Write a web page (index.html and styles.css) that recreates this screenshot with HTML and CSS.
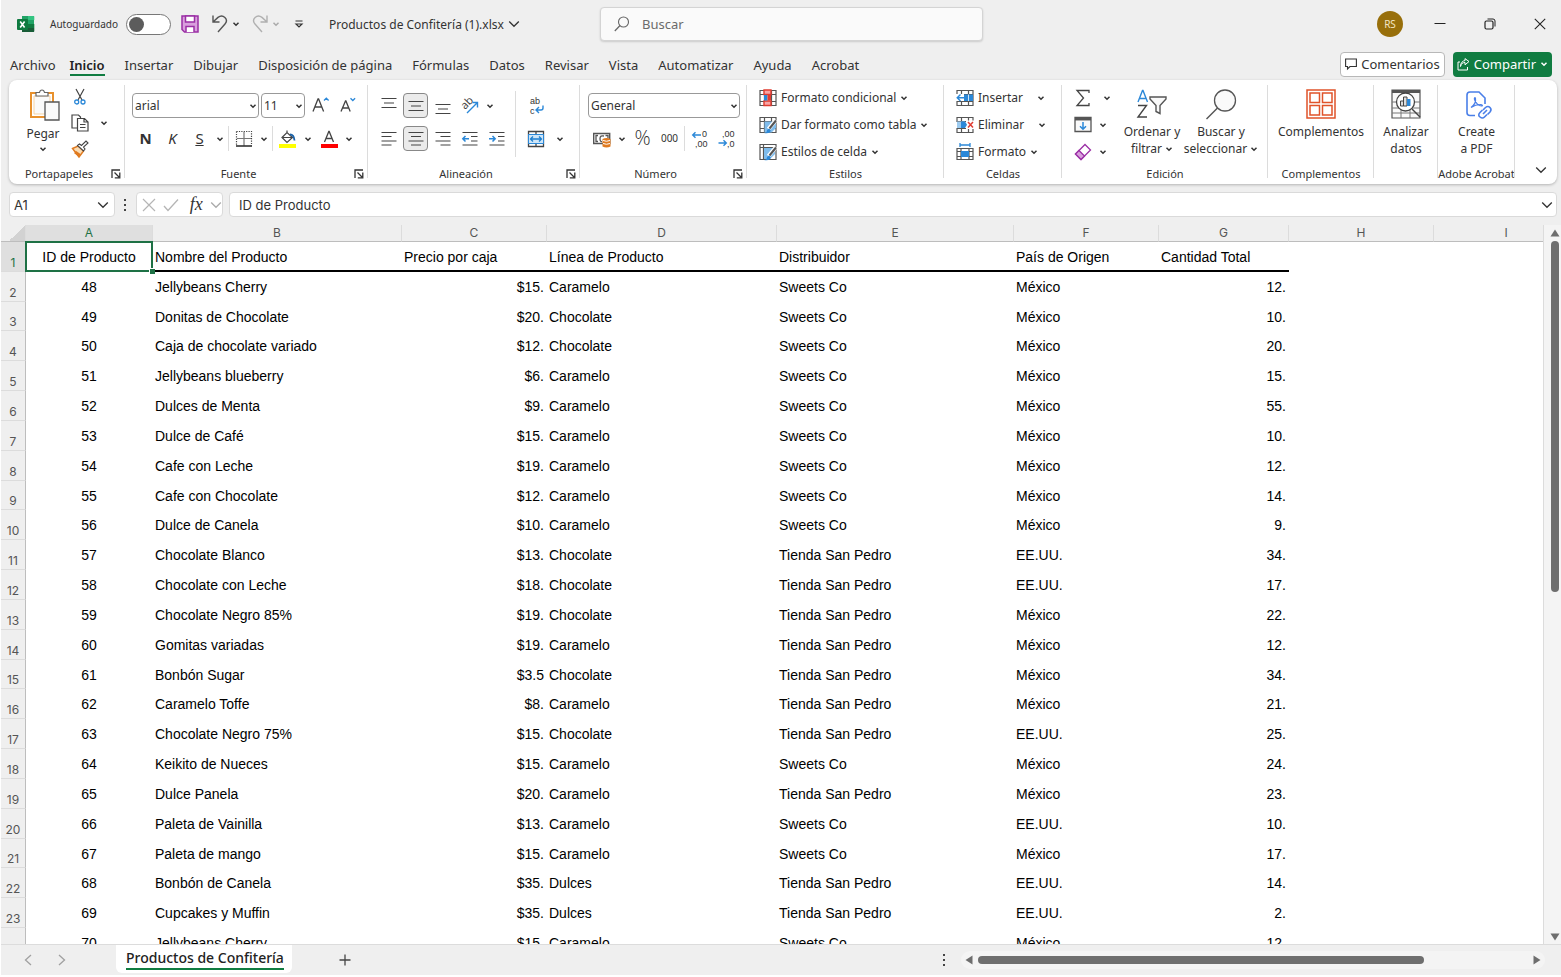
FILE: index.html
```html
<!DOCTYPE html>
<html lang="es">
<head>
    <meta charset="UTF-8">
    <meta name="viewport" content="width=device-width, initial-scale=1.0">
    <title>Productos de Confitería (1).xlsx - Excel</title>
    <link rel="stylesheet" href="styles.css">
</head>
<body>
    <!-- Iconos compartidos -->
    <svg class="sprite" aria-hidden="true">
        <symbol id="chev" viewBox="0 0 8 8"><path d="M1.5 2.8 4 5.2 6.5 2.8" fill="none" stroke="currentColor" stroke-width="1.5"/></symbol>
        <symbol id="chev-big" viewBox="0 0 12 12"><path d="M1.2 3.5 6 8.3 10.8 3.5" fill="none" stroke="currentColor" stroke-width="1.3"/></symbol>
        <symbol id="launch" viewBox="0 0 10 10"><path d="M1 9V1h8M3.5 3.5 8 8M8.8 3.5v5.3H3.8" fill="none" stroke="currentColor" stroke-width="1.3"/></symbol>
        <symbol id="cells" viewBox="0 0 18 18"><path d="M1 1.5h16v15H1zM1 5.5h16M1 12.5h16M5.5 1.5v15M12.5 1.5v15" fill="#fff" stroke="#555" stroke-width="1.2"/></symbol>
    </svg>

    <!-- Barra de título -->
    <header class="titlebar">
        <div class="quick">
            <svg class="logo" viewBox="0 0 18 18"><path d="M5 1h12v16H5z" fill="#21a366"/><path d="M11 1h5.500q.8 0 .8.800V5H11z" fill="#33c481"/><path d="M5 5h6v4H5z" fill="#107c41"/><path d="M11 9h6.300v4H11z" fill="#107c41"/><path d="M5 9h6v4H5zM5 13h12.300v3q0 1-1 1H5z" fill="#185c37"/><rect y="4" width="11" height="11" rx="1" fill="#0f7a40"/><path d="m3.200 6.500 4.400 6M7.600 6.500l-4.400 6" stroke="#fff" stroke-width="1.600"/></svg>
            <label class="autosave" for="autosave">Autoguardado</label>
            <input type="checkbox" class="toggle" id="autosave">
            <button class="icon-btn save" aria-label="Guardar"><svg width="18" height="18" viewBox="0 0 18 18"><path d="M1 1h16v16H3.500L1 14.500z" fill="#d9a0dd" stroke="#9b2fa5" stroke-width="1.500"/><path d="M4.500 1h9v6h-9zM5 17v-5.500h8V17" fill="#fff" stroke="#9b2fa5" stroke-width="1.500"/></svg></button>
            <button class="icon-btn undo" aria-label="Deshacer"><svg width="18" height="18" viewBox="0 0 18 18"><path d="M2 .5V7h6.500M2 7l5-4.600c5-4 11 2 7 6.600L7 17" fill="none" stroke="#555" stroke-width="1.400"/></svg></button>
            <button class="chev-btn" aria-label="Más deshacer"><svg class="chev"><use href="#chev"/></svg></button>
            <button class="icon-btn redo" aria-label="Rehacer"><svg width="18" height="18" viewBox="0 0 18 18"><path d="M16 .5V7H9.500M16 7l-5-4.600C6-1.600 0 4.400 4 9l7 8" fill="none" stroke="#b0b0b0" stroke-width="1.400"/></svg></button>
            <button class="chev-btn muted" aria-label="Más rehacer"><svg class="chev"><use href="#chev"/></svg></button>
            <button class="icon-btn customize" aria-label="Personalizar"><svg width="10" height="10" viewBox="0 0 10 10"><path d="M1.500 2h7M2 5h6L5 8z" fill="none" stroke="#333" stroke-width="1.200"/></svg></button>
            <button class="filename">Productos de Confitería (1).xlsx <svg class="chev-l"><use href="#chev-big"/></svg></button>
        </div>
        <label class="search">
            <svg width="16" height="16" viewBox="0 0 16 16"><circle cx="9.500" cy="6" r="5" fill="none" stroke="#666" stroke-width="1.100"/><path d="M6 9.500.8 15" stroke="#666" stroke-width="1.200"/></svg>
            <input type="text" placeholder="Buscar" aria-label="Buscar">
        </label>
        <div class="window-controls">
            <button class="avatar">RS</button>
            <button class="win-btn" aria-label="Minimizar"><svg width="12" height="12" viewBox="0 0 12 12"><path d="M.5 5.500h11" stroke="#222"/></svg></button>
            <button class="win-btn" aria-label="Restaurar"><svg width="12" height="12" viewBox="0 0 12 12"><rect x="1" y="3" width="8" height="8" rx="1.500" fill="none" stroke="#222" stroke-width="1.200"/><path d="M3.500 1H9q2 0 2 2v5.500" fill="none" stroke="#222"/></svg></button>
            <button class="win-btn" aria-label="Cerrar"><svg width="12" height="12" viewBox="0 0 12 12"><path d="m.8.8 10.400 10.400M11.200.8.8 11.200" stroke="#222" stroke-width="1.100"/></svg></button>
        </div>
    </header>

    <!-- Pestañas -->
    <nav class="tabs">
        <a class="tab file" href="#">Archivo</a>
        <a class="tab active" href="#">Inicio</a>
        <a class="tab" href="#">Insertar</a>
        <a class="tab" href="#">Dibujar</a>
        <a class="tab" href="#">Disposición de página</a>
        <a class="tab" href="#">Fórmulas</a>
        <a class="tab" href="#">Datos</a>
        <a class="tab" href="#">Revisar</a>
        <a class="tab" href="#">Vista</a>
        <a class="tab" href="#">Automatizar</a>
        <a class="tab" href="#">Ayuda</a>
        <a class="tab" href="#">Acrobat</a>
        <div class="tab-actions">
            <button class="comments"><svg width="12" height="12" viewBox="0 0 12 12"><path d="M.6 1h10.800v7.500H5L2.500 11V8.500H.6z" fill="none" stroke="#333" stroke-width="1.100"/></svg>Comentarios</button>
            <button class="share"><svg width="13" height="13" viewBox="0 0 13 13"><path d="M3 4H1v8h9.500V9M3.500 8.500C4 5.500 6 4.500 8 4.500V6.800L12 3.500 8 .6v2C5.500 2.800 3.500 5 3.500 8.500z" fill="none" stroke="#fff"/></svg>Compartir<svg class="chev"><use href="#chev"/></svg></button>
        </div>
    </nav>

    <!-- Cinta de opciones -->
    <section class="ribbon">
        <div class="group clipboard">
            <div class="group-body">
                <button class="big paste"><svg width="32" height="32" viewBox="0 0 32 32"><path d="M2 4h22v24H2z" fill="#fff" stroke="#e8912d" stroke-width="2"/><path d="M5 7h16v18H5z" fill="#fafafa" stroke="#f5d3a5"/><path d="M7 7V3.500h3.500Q11 1 13 1t2.500 2.500H19V7z" fill="#fff" stroke="#666" stroke-width="1.200"/><path d="M16 13h14v18H16z" fill="#fafafa" stroke="#555" stroke-width="1.300"/></svg><span>Pegar</span><svg class="chev"><use href="#chev"/></svg></button>
                <div class="stack">
                    <button class="tool" aria-label="Cortar"><svg width="14" height="18" viewBox="0 0 14 18"><path d="m3 1 6 11M11 1 5 12" stroke="#444" stroke-width="1.200"/><circle cx="3.700" cy="14" r="2" fill="none" stroke="#2b88d8" stroke-width="1.300"/><circle cx="10" cy="14" r="2" fill="none" stroke="#2b88d8" stroke-width="1.300"/></svg></button>
                    <div class="split"><button class="tool" aria-label="Copiar"><svg width="18" height="18" viewBox="0 0 18 18"><path d="M6 14H1V1h6.500l2 2v1" fill="#fff" stroke="#444" stroke-width="1.200"/><path d="M6.500 4.500h7L17 8v9H6.500zM13 4.500V8h4M9 10.500h5.500M9 13.500h5.500" fill="#fff" stroke="#444" stroke-width="1.200"/></svg></button><button class="chev-btn wide" aria-label="Opciones de copiar"><svg class="chev"><use href="#chev"/></svg></button></div>
                    <button class="tool" aria-label="Copiar formato"><svg width="18" height="18" viewBox="0 0 18 18"><path d="M1.500 8.500 7 6l5.500 5L8 17z" fill="#f9dcb5" stroke="#e07a1f" stroke-width="1.400"/><path d="m4 12 5 3.500" stroke="#e07a1f" stroke-width="3"/><path d="m6.500 5.500 2-1.500 2 1.500 4.500-4.500 2 2L12.500 7l1.500 2-1.500 2z" fill="#fff" stroke="#444" stroke-width="1.100"/></svg></button>
                </div>
            </div>
            <div class="group-label">Portapapeles<button class="launcher" aria-label="Ver más"><svg width="10" height="10"><use href="#launch"/></svg></button></div>
        </div>

        <div class="group font">
            <div class="group-body rows">
                <div class="row">
                    <span class="select font-name"><select aria-label="Fuente"><option>arial</option></select><svg class="chev"><use href="#chev"/></svg></span>
                    <span class="select font-size"><select aria-label="Tamaño de fuente"><option>11</option></select><svg class="chev"><use href="#chev"/></svg></span>
                    <button class="tool" aria-label="Aumentar"><svg width="18" height="18" viewBox="0 0 18 18"><path d="M1 14.500 6 2h.6l5 12.500M3 10h6.800" fill="none" stroke="#444" stroke-width="1.300"/><path d="m12 3.500 2.300-2.300 2.300 2.300" fill="none" stroke="#2b88d8" stroke-width="1.300"/></svg></button>
                    <button class="tool" aria-label="Disminuir"><svg width="18" height="18" viewBox="0 0 18 18"><path d="M2 14.500 6.500 4h.4l4.300 10.500M3.600 11h6.200" fill="none" stroke="#444" stroke-width="1.300"/><path d="m11.500 1.200 2.300 2.300 2.300-2.300" fill="none" stroke="#2b88d8" stroke-width="1.300"/></svg></button>
                </div>
                <div class="row">
                    <button class="tool glyph bold">N</button>
                    <button class="tool glyph italic">K</button>
                    <div class="split"><button class="tool glyph underline">S</button><button class="chev-btn" aria-label="Subrayados"><svg class="chev"><use href="#chev"/></svg></button></div>
                    <i class="bar"></i>
                    <div class="split"><button class="tool" aria-label="Bordes"><svg width="18" height="18" viewBox="0 0 18 18"><path d="M1.500 1.500h15v14M1.500 1.500v14" fill="none" stroke="#444" stroke-dasharray="1.200 1.200" stroke-width="1.200"/><path d="M9 2v14M2 8.500h14" stroke="#777" stroke-width="1.200"/><path d="M1 16h16" stroke="#333" stroke-width="1.600"/></svg></button><button class="chev-btn" aria-label="Más bordes"><svg class="chev"><use href="#chev"/></svg></button></div>
                    <i class="bar"></i>
                    <div class="split"><button class="tool" aria-label="Color de relleno"><svg width="18" height="18" viewBox="0 0 18 18"><path d="m3 7.500 5-5 5.500 5L8 12.500zM8 2.500V.5M4 7.500h9" fill="#fff" stroke="#444" stroke-width="1.200"/><path d="M11 4.500q4 0 4.500 6" fill="none" stroke="#1b62a8" stroke-width="1.800"/><path d="M0 14h17v4H0z" fill="#ff0"/></svg></button><button class="chev-btn" aria-label="Más colores de relleno"><svg class="chev"><use href="#chev"/></svg></button></div>
                    <div class="split"><button class="tool" aria-label="Color de fuente"><svg width="18" height="18" viewBox="0 0 18 18"><path d="M4.500 12 8.800 1.500h.4L13.500 12M6 8.500h6" fill="none" stroke="#444" stroke-width="1.300"/><path d="M1 14h17v4H1z" fill="red"/></svg></button><button class="chev-btn" aria-label="Más colores de fuente"><svg class="chev"><use href="#chev"/></svg></button></div>
                </div>
            </div>
            <div class="group-label">Fuente<button class="launcher" aria-label="Ver más"><svg width="10" height="10"><use href="#launch"/></svg></button></div>
        </div>

        <div class="group align">
            <div class="group-body">
                <div class="rows">
                    <div class="row">
                        <button class="tool" aria-label="Alinear arriba"><svg width="18" height="18" viewBox="0 0 18 18"><path d="M1.500 1.500h15M4 6h10M1.500 10.500h15" stroke="#444" stroke-width="1.200"/></svg></button>
                        <button class="tool on" aria-label="Alinear al medio"><svg width="18" height="18" viewBox="0 0 18 18"><path d="M1.500 4.500h15M4 9h10M1.500 13.500h15" stroke="#444" stroke-width="1.200"/></svg></button>
                        <button class="tool" aria-label="Alinear abajo"><svg width="18" height="18" viewBox="0 0 18 18"><path d="M1.500 7.500h15M4 12h10M1.500 16.500h15" stroke="#444" stroke-width="1.200"/></svg></button>
                        <div class="split"><button class="tool" aria-label="Orientación"><svg width="18" height="18" viewBox="0 0 18 18"><text class="ab" x="0" y="0" transform="translate(4 13) rotate(-45)">ab</text><path d="m6 16 10-10M11.500 5.500h5v5" fill="none" stroke="#2b88d8" stroke-width="1.400"/></svg></button><button class="chev-btn" aria-label="Orientaciones"><svg class="chev"><use href="#chev"/></svg></button></div>
                    </div>
                    <div class="row">
                        <button class="tool" aria-label="Izquierda"><svg width="18" height="18" viewBox="0 0 18 18"><path d="M1.500 2.500h15M1.500 6.500h10M1.500 11h15M1.500 15h10" stroke="#444" stroke-width="1.200"/></svg></button>
                        <button class="tool on" aria-label="Centrar"><svg width="18" height="18" viewBox="0 0 18 18"><path d="M1.500 2.500h15M4 6.500h10M1.500 11h15M4 15h10" stroke="#444" stroke-width="1.200"/></svg></button>
                        <button class="tool" aria-label="Derecha"><svg width="18" height="18" viewBox="0 0 18 18"><path d="M1.500 2.500h15M6.500 6.500h10M1.500 11h15M6.500 15h10" stroke="#444" stroke-width="1.200"/></svg></button>
                        <button class="tool" aria-label="Disminuir sangría"><svg width="18" height="18" viewBox="0 0 18 18"><path d="M1.500 2.500h15M10 6.500h6.500M10 11h6.500M1.500 15h15" stroke="#444" stroke-width="1.200"/><path d="M8 8.800H2M4.500 6 1.800 8.800l2.700 2.800" fill="none" stroke="#2b88d8" stroke-width="1.500"/></svg></button>
                        <button class="tool" aria-label="Aumentar sangría"><svg width="18" height="18" viewBox="0 0 18 18"><path d="M1.500 2.500h15M10 6.500h6.500M10 11h6.500M1.500 15h15" stroke="#444" stroke-width="1.200"/><path d="M1 8.800h6M4.500 6l2.700 2.800-2.700 2.800" fill="none" stroke="#2b88d8" stroke-width="1.500"/></svg></button>
                    </div>
                </div>
                <i class="bar tall"></i>
                <div class="rows">
                    <div class="row"><button class="tool" aria-label="Ajustar texto"><svg width="18" height="18" viewBox="0 0 18 18"><text class="wrap-ab" x="3" y="7">ab</text><text class="wrap-ab" x="3" y="17">c</text><path d="M16 8.500V11q0 2-2 2h-4.500M12 10l-3 3 3 3" fill="none" stroke="#2b88d8" stroke-width="1.400"/></svg></button></div>
                    <div class="row"><div class="split"><button class="tool" aria-label="Combinar y centrar"><svg width="18" height="18" viewBox="0 0 18 18"><path d="M1.500 1.500h15v15h-15zM9 1.500v15" fill="#fff" stroke="#444" stroke-width="1.300"/><path d="M1.500 4.500h15v9h-15z" fill="#cfe6f8" stroke="#2b88d8"/><path d="M4 9h10M6 6.500 3.500 9 6 11.500M12 6.500 14.500 9 12 11.500" fill="none" stroke="#1e7fcf" stroke-width="1.300"/></svg></button><button class="chev-btn wide" aria-label="Más combinaciones"><svg class="chev"><use href="#chev"/></svg></button></div></div>
                </div>
            </div>
            <div class="group-label">Alineación<button class="launcher" aria-label="Ver más"><svg width="10" height="10"><use href="#launch"/></svg></button></div>
        </div>

        <div class="group number">
            <div class="group-body rows">
                <div class="row"><span class="select number-format"><select aria-label="Formato de número"><option>General</option></select><svg class="chev"><use href="#chev"/></svg></span></div>
                <div class="row">
                    <div class="split"><button class="tool" aria-label="Moneda"><svg width="18" height="18" viewBox="0 0 18 18"><path d="M.700 3.500h16v10h-16z" fill="#fff" stroke="#555" stroke-width="1.400"/><path d="M5 5.500H3v6h2M11 6q-4-1-4 2.500t2 3M12.500 5.500H15v3" fill="none" stroke="#555" stroke-width="1.300"/><path d="M9.500 9q4-2 8 0v7.500q-4 2-8 0z" fill="#e07a1f"/><path d="M10 10.500q3.500 1.500 7 0M10 13.500q3.500 1.500 7 0" fill="none" stroke="#fff"/></svg></button><button class="chev-btn" aria-label="Más monedas"><svg class="chev"><use href="#chev"/></svg></button></div>
                    <button class="tool glyph percent">%</button>
                    <button class="tool glyph thousands">000</button>
                    <i class="bar"></i>
                    <button class="tool" aria-label="Aumentar decimales"><svg width="18" height="18" viewBox="0 0 18 18"><text class="dec" x="11" y="7">0</text><text class="dec" x="4" y="17">,00</text><path d="M10 5H2M4.500 2.200 1.700 5l2.800 2.800" fill="none" stroke="#2b88d8" stroke-width="1.400"/></svg></button>
                    <button class="tool" aria-label="Disminuir decimales"><svg width="18" height="18" viewBox="0 0 18 18"><text class="dec" x="4" y="7">,00</text><text class="dec" x="9" y="17">,0</text><path d="M.500 13h8M5.500 10.200 8.300 13l-2.800 2.800" fill="none" stroke="#2b88d8" stroke-width="1.400"/></svg></button>
                </div>
            </div>
            <div class="group-label">Número<button class="launcher" aria-label="Ver más"><svg width="10" height="10"><use href="#launch"/></svg></button></div>
        </div>

        <div class="group styles">
            <div class="group-body stack">
                <button class="line"><svg width="18" height="18" viewBox="0 0 18 18"><use href="#cells"/><path d="M5 1h7v4.500H5zM5 12h7v4.500H5z" fill="#f8a5a5" stroke="#e03c31" stroke-width="1.400"/><path d="M5 6h3.500v5.500H5z" fill="#2b88d8"/><path d="M8.500 6H12v5.500H8.500z" fill="#e03c31"/></svg>Formato condicional<svg class="chev"><use href="#chev"/></svg></button>
                <button class="line"><svg width="18" height="18" viewBox="0 0 18 18"><use href="#cells"/><path d="M5.500 5.500H17V12l-4.500 4.500h-7z" fill="#7fbcec"/><path d="m17 4-7.500 9" stroke="#fff" stroke-width="4"/><path d="m17 4.500-6.500 8" stroke="#555" stroke-width="2"/><path d="M5 17q3 0 3-3l2-1.500 1.700 1.500q0 4-6.700 3z" fill="#2b88d8"/></svg>Dar formato como tabla<svg class="chev"><use href="#chev"/></svg></button>
                <button class="line"><svg width="18" height="18" viewBox="0 0 18 18"><path d="M1 1.500h16v15H1zM1 4.500h16M4.500 1.500v15" fill="#fff" stroke="#555" stroke-width="1.200"/><path d="M5 5h11v6l-5 5H5z" fill="#7fbcec"/><path d="m17 4-7.500 9" stroke="#fff" stroke-width="4"/><path d="m17 4.500-6.500 8" stroke="#555" stroke-width="2"/><path d="M5 17q3 0 3-3l2-1.500 1.700 1.500q0 4-6.700 3z" fill="#2b88d8"/></svg>Estilos de celda<svg class="chev"><use href="#chev"/></svg></button>
            </div>
            <div class="group-label">Estilos</div>
        </div>

        <div class="group cells">
            <div class="group-body stack">
                <button class="line spaced"><svg width="18" height="18" viewBox="0 0 18 18"><use href="#cells"/><path d="M0 5h8v7H0z" fill="#fff"/><path d="M8 5.500h9V12H8z" fill="#2b88d8"/><path d="M12.500 5.500V12" stroke="#cfe6f8"/><path d="M9 8.800H1.500M4.500 5.500 1.200 8.800l3.300 3.300" fill="none" stroke="#2b88d8" stroke-width="1.400"/></svg>Insertar<svg class="chev"><use href="#chev"/></svg></button>
                <button class="line spaced"><svg width="18" height="18" viewBox="0 0 18 18"><use href="#cells"/><path d="M10 4.500h8v8.500h-8zM0 6h4v6H0z" fill="#fff"/><path d="M1 5.500h8V12H1z" fill="#9ccbf0"/><path d="M5 5.500h4l2 3.300L9 12H5z" fill="#2b88d8"/><path d="m12 6 5 5.500M17 6l-5 5.500" stroke="#e03c31" stroke-width="1.500"/></svg>Eliminar<svg class="chev"><use href="#chev"/></svg></button>
                <button class="line"><svg width="18" height="18" viewBox="0 0 18 18"><path d="M1 5.500h16v11H1zM1 8.500h16M1 13.500h16M5 5.500v11M13 5.500v11" fill="#fff" stroke="#555" stroke-width="1.200"/><path d="M5 8h8v6H5z" fill="#2b88d8"/><path d="M4 2h10M4 0v4M14 0v4" stroke="#2b88d8" stroke-width="1.300"/></svg>Formato<svg class="chev"><use href="#chev"/></svg></button>
            </div>
            <div class="group-label">Celdas</div>
        </div>

        <div class="group editing">
            <div class="group-body">
                <div class="stack">
                    <div class="split"><button class="tool" aria-label="Autosuma"><svg width="18" height="18" viewBox="0 0 18 18"><path d="M15 4V1.500H3l6.500 7.500L3 16.500h12V14" fill="none" stroke="#444" stroke-width="1.300"/></svg></button><button class="chev-btn wide" aria-label="Más funciones"><svg class="chev"><use href="#chev"/></svg></button></div>
                    <div class="split"><button class="tool" aria-label="Rellenar"><svg width="18" height="18" viewBox="0 0 18 18"><path d="M1 1.500h16v14H1z" fill="#fafafa" stroke="#555" stroke-width="1.300"/><path d="M1 3.200h16" stroke="#555" stroke-width="2.500"/><path d="M9 6v7M6 10.200l3 3 3-3" fill="none" stroke="#2b88d8" stroke-width="1.500"/></svg></button><button class="chev-btn" aria-label="Más relleno"><svg class="chev"><use href="#chev"/></svg></button></div>
                    <div class="split"><button class="tool" aria-label="Borrar"><svg width="18" height="18" viewBox="0 0 18 18"><path d="M11 1.500 16.500 7 7 16.500 1.500 11z" fill="#fff" stroke="#9b2fa5" stroke-width="1.300"/><path d="M5 7.500 10.500 13 7 16.500 1.500 11z" fill="#d9a0dd" stroke="#9b2fa5" stroke-width="1.300"/></svg></button><button class="chev-btn" aria-label="Más borrar"><svg class="chev"><use href="#chev"/></svg></button></div>
                </div>
                <button class="big sort"><svg width="32" height="32" viewBox="0 0 32 32"><path d="M2 14 6.500 2.500h.5L11.500 14M3.500 10.500h6" fill="none" stroke="#2b88d8" stroke-width="1.400"/><path d="M2 17.500h8.500L2 29h9" fill="none" stroke="#444" stroke-width="1.400"/><path d="M14 9h16v2l-6 6.500v8l-4-2v-6L14 11z" fill="#fafafa" stroke="#555" stroke-width="1.400"/></svg><span>Ordenar y<br>filtrar <svg class="chev"><use href="#chev"/></svg></span></button>
                <button class="big find"><svg width="32" height="32" viewBox="0 0 32 32"><circle cx="20" cy="12.500" r="10.500" fill="#fafafa" stroke="#555" stroke-width="1.300"/><path d="M12.500 20 1.500 31" stroke="#555" stroke-width="1.400"/></svg><span>Buscar y<br>seleccionar <svg class="chev"><use href="#chev"/></svg></span></button>
            </div>
            <div class="group-label">Edición</div>
        </div>

        <div class="group addins">
            <div class="group-body">
                <button class="big"><svg width="32" height="32" viewBox="0 0 32 32"><path d="M2 2h28v28H2zM5 5h9.500v9.500H5zM17.500 5H27v9.500h-9.500zM5 17.500h9.500V27H5zM17.500 17.500H27V27h-9.500z" fill="#fff" stroke="#e0532a" stroke-width="1.500"/></svg><span>Complementos</span></button>
            </div>
            <div class="group-label">Complementos</div>
        </div>

        <div class="group analyze">
            <div class="group-body">
                <button class="big"><svg width="32" height="32" viewBox="0 0 32 32"><path d="M2 2h28v28H2z" fill="#fafafa" stroke="#555" stroke-width="1.200"/><path d="M2 3.500h28" stroke="#555" stroke-width="3"/><path d="M2 14h28M2 20h28M11 20v10M20 20v10M2 25h28" stroke="#777"/><circle cx="15.500" cy="14" r="9" fill="#fff" stroke="#444" stroke-width="1.300"/><path d="m22 21 8 8" stroke="#444" stroke-width="1.500"/><path d="M10.500 13h3v5h-3zM13.500 9h3.500v9h-3.500z" fill="#ddd" stroke="#444"/><path d="M17 11h3.500v7H17z" fill="#2b88d8"/></svg><span>Analizar<br>datos</span></button>
            </div>
            <div class="group-label"></div>
        </div>

        <div class="group acrobat">
            <div class="group-body">
                <button class="big"><svg width="32" height="32" viewBox="0 0 32 32"><path d="M14 27.500H9q-3 0-3-3V7q0-3 3-3h9l6 6v6" fill="none" stroke="#4a7fe8" stroke-width="1.600"/><path d="M10 19.500c4-3 5-6 4.500-9-.3-1.500-1.500-1-1 1 .8 3 4 6.500 7 6.500 1.500 0 1-1.500-1-1.500-4 0-6.500 1-9.500 3z" fill="none" stroke="#4a7fe8" stroke-width="1.200"/><path d="m22 22 2.500-2.500q2.500-2 4.500 0t0 4.500l-2.500 2.500M26 26.500 23.500 29q-2 2-4.500 0t0-4.500l2.500-2.500M22 26l4-4" fill="none" stroke="#4a7fe8" stroke-width="1.600"/></svg><span>Create<br>a PDF</span></button>
            </div>
            <div class="group-label">Adobe Acrobat</div>
        </div>
        <button class="collapse" aria-label="Contraer la cinta"><svg class="chev-l"><use href="#chev-big"/></svg></button>
    </section>

    <!-- Barra de fórmulas -->
    <section class="formula-bar">
        <label class="name-box"><input type="text" value="A1" aria-label="Cuadro de nombres"><svg class="chev-l"><use href="#chev-big"/></svg></label>
        <span class="dots"><i></i><i></i><i></i></span>
        <div class="fx-box">
            <button aria-label="Cancelar"><svg width="14" height="14" viewBox="0 0 14 14"><path d="m1 1 12 12M13 1 1 13" stroke="#b5b5b5" stroke-width="1.200"/></svg></button>
            <button aria-label="Introducir"><svg width="16" height="14" viewBox="0 0 16 14"><path d="m1 8 4 4.500L15 1.500" fill="none" stroke="#b5b5b5" stroke-width="1.300"/></svg></button>
            <button class="fx">fx</button>
            <button class="muted" aria-label="Funciones"><svg class="chev-l"><use href="#chev-big"/></svg></button>
        </div>
        <label class="formula"><input type="text" value="ID de Producto" aria-label="Barra de fórmulas"><svg class="chev-l"><use href="#chev-big"/></svg></label>
    </section>

    <!-- Hoja de cálculo -->
    <main class="workspace">
        <div class="sheet">
            <table>
                <colgroup><col class="c-row"><col class="c-a"><col class="c-b"><col class="c-m"><col class="c-d"><col class="c-e"><col class="c-m"><col class="c-g"><col class="c-m"><col class="c-m"></colgroup>
                <thead>
                    <tr><th class="corner"></th><th class="sel">A</th><th>B</th><th>C</th><th>D</th><th>E</th><th>F</th><th>G</th><th>H</th><th>I</th></tr>
                </thead>
                <tbody>
                    <tr class="titles"><th class="sel">1</th><td class="selected">ID de Producto</td><td>Nombre del Producto</td><td>Precio por caja</td><td>Línea de Producto</td><td>Distribuidor</td><td>País de Origen</td><td>Cantidad Total</td><td></td><td></td></tr>
                    <tr><th>2</th><td>48</td><td>Jellybeans Cherry</td><td>$15.</td><td>Caramelo</td><td>Sweets Co</td><td>México</td><td>12.</td><td></td><td></td></tr>
                    <tr><th>3</th><td>49</td><td>Donitas de Chocolate</td><td>$20.</td><td>Chocolate</td><td>Sweets Co</td><td>México</td><td>10.</td><td></td><td></td></tr>
                    <tr><th>4</th><td>50</td><td>Caja de chocolate variado</td><td>$12.</td><td>Chocolate</td><td>Sweets Co</td><td>México</td><td>20.</td><td></td><td></td></tr>
                    <tr><th>5</th><td>51</td><td>Jellybeans blueberry</td><td>$6.</td><td>Caramelo</td><td>Sweets Co</td><td>México</td><td>15.</td><td></td><td></td></tr>
                    <tr><th>6</th><td>52</td><td>Dulces de Menta</td><td>$9.</td><td>Caramelo</td><td>Sweets Co</td><td>México</td><td>55.</td><td></td><td></td></tr>
                    <tr><th>7</th><td>53</td><td>Dulce de Café</td><td>$15.</td><td>Caramelo</td><td>Sweets Co</td><td>México</td><td>10.</td><td></td><td></td></tr>
                    <tr><th>8</th><td>54</td><td>Cafe con Leche</td><td>$19.</td><td>Caramelo</td><td>Sweets Co</td><td>México</td><td>12.</td><td></td><td></td></tr>
                    <tr><th>9</th><td>55</td><td>Cafe con Chocolate</td><td>$12.</td><td>Caramelo</td><td>Sweets Co</td><td>México</td><td>14.</td><td></td><td></td></tr>
                    <tr><th>10</th><td>56</td><td>Dulce de Canela</td><td>$10.</td><td>Caramelo</td><td>Sweets Co</td><td>México</td><td>9.</td><td></td><td></td></tr>
                    <tr><th>11</th><td>57</td><td>Chocolate Blanco</td><td>$13.</td><td>Chocolate</td><td>Tienda San Pedro</td><td>EE.UU.</td><td>34.</td><td></td><td></td></tr>
                    <tr><th>12</th><td>58</td><td>Chocolate con Leche</td><td>$18.</td><td>Chocolate</td><td>Tienda San Pedro</td><td>EE.UU.</td><td>17.</td><td></td><td></td></tr>
                    <tr><th>13</th><td>59</td><td>Chocolate Negro 85%</td><td>$19.</td><td>Chocolate</td><td>Tienda San Pedro</td><td>México</td><td>22.</td><td></td><td></td></tr>
                    <tr><th>14</th><td>60</td><td>Gomitas variadas</td><td>$19.</td><td>Caramelo</td><td>Tienda San Pedro</td><td>México</td><td>12.</td><td></td><td></td></tr>
                    <tr><th>15</th><td>61</td><td>Bonbón Sugar</td><td>$3.5</td><td>Chocolate</td><td>Tienda San Pedro</td><td>México</td><td>34.</td><td></td><td></td></tr>
                    <tr><th>16</th><td>62</td><td>Caramelo Toffe</td><td>$8.</td><td>Caramelo</td><td>Tienda San Pedro</td><td>México</td><td>21.</td><td></td><td></td></tr>
                    <tr><th>17</th><td>63</td><td>Chocolate Negro 75%</td><td>$15.</td><td>Chocolate</td><td>Tienda San Pedro</td><td>EE.UU.</td><td>25.</td><td></td><td></td></tr>
                    <tr><th>18</th><td>64</td><td>Keikito de Nueces</td><td>$15.</td><td>Caramelo</td><td>Sweets Co</td><td>México</td><td>24.</td><td></td><td></td></tr>
                    <tr><th>19</th><td>65</td><td>Dulce Panela</td><td>$20.</td><td>Caramelo</td><td>Tienda San Pedro</td><td>México</td><td>23.</td><td></td><td></td></tr>
                    <tr><th>20</th><td>66</td><td>Paleta de Vainilla</td><td>$13.</td><td>Caramelo</td><td>Sweets Co</td><td>EE.UU.</td><td>10.</td><td></td><td></td></tr>
                    <tr><th>21</th><td>67</td><td>Paleta de mango</td><td>$15.</td><td>Caramelo</td><td>Sweets Co</td><td>México</td><td>17.</td><td></td><td></td></tr>
                    <tr><th>22</th><td>68</td><td>Bonbón de Canela</td><td>$35.</td><td>Dulces</td><td>Tienda San Pedro</td><td>EE.UU.</td><td>14.</td><td></td><td></td></tr>
                    <tr><th>23</th><td>69</td><td>Cupcakes y Muffin</td><td>$35.</td><td>Dulces</td><td>Tienda San Pedro</td><td>EE.UU.</td><td>2.</td><td></td><td></td></tr>
                    <tr><th></th><td>70</td><td>Jellybeans Cherry</td><td>$15.</td><td>Caramelo</td><td>Sweets Co</td><td>México</td><td>12.</td><td></td><td></td></tr>
                </tbody>
            </table>
        </div>
        <div class="vscroll">
            <svg width="10" height="8" viewBox="0 0 10 8"><path d="M5 .5 9.500 7.500h-9z" fill="#6e6e6e"/></svg>
            <div class="track"><div class="thumb"></div></div>
            <svg width="10" height="8" viewBox="0 0 10 8"><path d="M5 7.500 9.500.5h-9z" fill="#6e6e6e"/></svg>
        </div>
    </main>

    <!-- Hojas -->
    <footer class="sheet-bar">
        <button class="nav-btn" aria-label="Anterior"><svg width="8" height="12" viewBox="0 0 8 12"><path d="M7 1 1.500 6 7 11" fill="none" stroke="#a0a0a0" stroke-width="1.300"/></svg></button>
        <button class="nav-btn" aria-label="Siguiente"><svg width="8" height="12" viewBox="0 0 8 12"><path d="m1 1 5.500 5L1 11" fill="none" stroke="#a0a0a0" stroke-width="1.300"/></svg></button>
        <button class="sheet-tab"><span>Productos de Confitería</span></button>
        <button class="add-sheet" aria-label="Hoja nueva"><svg width="12" height="12" viewBox="0 0 12 12"><path d="M6 .5v11M.5 6h11" stroke="#444" stroke-width="1.300"/></svg></button>
        <span class="dots"><i></i><i></i><i></i></span>
        <div class="hscroll">
            <svg width="8" height="10" viewBox="0 0 8 10"><path d="M.5 5 7.500.5v9z" fill="#6e6e6e"/></svg>
            <div class="track"><div class="thumb"></div></div>
            <svg width="8" height="10" viewBox="0 0 8 10"><path d="M7.500 5 .5.5v9z" fill="#6e6e6e"/></svg>
        </div>
    </footer>
</body>
</html>
```
FILE: styles.css
```css
* {
    box-sizing: border-box;
}

body {
    margin: 0;
    height: 100vh;
    display: flex;
    flex-direction: column;
    overflow: hidden;
    border: solid #fff;
    border-width: 0 0 2px 1px;
    background-color: #efefef;
    color: #333;
    font-family: "Noto Sans", "Open Sans", sans-serif;
    font-size: 13px;
}

button, input, select {
    font: inherit;
    color: inherit;
    background: none;
    border: none;
    padding: 0;
    margin: 0;
    outline: none;
}

button {
    display: flex;
    align-items: center;
    justify-content: center;
    flex: none;
    white-space: nowrap;
}

svg {
    flex: none;
    overflow: visible;
}

.sprite {
    position: absolute;
    width: 0;
    height: 0;
}

.chev {
    width: 8px;
    height: 8px;
}

.chev-l {
    width: 12px;
    height: 12px;
}

.muted {
    color: #aaa;
}

/* Barra de título */
.titlebar {
    height: 48px;
    flex: none;
    display: flex;
    align-items: center;
}

.quick {
    flex: 0 0 599px;
    display: flex;
    align-items: center;
    padding-left: 16px;
}

.logo {
    width: 18px;
    height: 18px;
}

.autosave {
    margin-left: 15px;
    width: 76px;
    font-size: 10px;
}

.toggle {
    appearance: none;
    width: 45px;
    height: 21px;
    border: 1px solid #777;
    border-radius: 11px;
    background-color: #fff;
    padding: 2px;
}

.toggle::before {
    content: "";
    display: block;
    width: 15px;
    height: 15px;
    border-radius: 50%;
    background-color: #5c5c5c;
}

.save {
    margin-left: 10px;
}

.undo {
    margin-left: 12px;
}

.redo {
    margin-left: 8px;
}

.customize {
    margin-left: 11px;
}

.chev-btn {
    width: 14px;
    height: 25px;
}

.filename {
    margin-left: 25px;
    font-size: 12px;
    gap: 4px;
}

.search {
    flex: 0 1 383px;
    height: 34px;
    display: flex;
    align-items: center;
    gap: 12px;
    padding: 0 13px;
    background-color: #fafafa;
    border: 1px solid #d4d4d4;
    border-radius: 4px;
    box-shadow: 0 1px 2px rgba(0,0,0,0.15);
}

.search input {
    flex: 1;
    min-width: 0;
}

.search input::placeholder {
    color: #6b6b6b;
    opacity: 1;
}

.window-controls {
    margin-left: auto;
    display: flex;
    align-items: center;
}

.avatar {
    width: 26px;
    height: 26px;
    border-radius: 50%;
    margin-right: 12px;
    background-color: #986f0b;
    color: #f3e6c4;
    font-size: 10px;
}

.win-btn {
    width: 50px;
    height: 32px;
}

.win-btn:last-child {
    margin-right: -4px;
}

/* Pestañas */
.tabs {
    height: 32px;
    flex: none;
    display: flex;
    align-items: center;
    padding: 0 9px;
}

.tab {
    position: relative;
    margin-right: 20px;
    line-height: 18px;
    padding-top: 2px;
    color: inherit;
    text-decoration: none;
    white-space: nowrap;
}

.tab.file {
    margin-right: 14px;
}

.tab.active {
    font-weight: 600;
    color: #222;
}

.tab.active::after {
    content: "";
    position: absolute;
    left: 0;
    right: 0;
    bottom: -2px;
    height: 2px;
    background-color: #107c41;
}

.tab-actions {
    margin-left: auto;
    display: flex;
    gap: 8px;
}

.comments, .share {
    height: 25px;
    gap: 4px;
    padding: 0 4px;
    border-radius: 4px;
}

.comments {
    background-color: #fff;
    border: 1px solid #b8b8b8;
}

.share {
    background-color: #107c41;
    color: #fff;
}

/* Cinta de opciones */
.ribbon {
    flex: none;
    display: flex;
    margin: 0 4px 0 8px;
    height: 104px;
    padding: 4px 0 1px;
    background-color: #fff;
    border-radius: 8px;
    box-shadow: 0 1px 3px rgba(0,0,0,0.25);
}

.group {
    position: relative;
    display: flex;
    flex-direction: column;
    flex: none;
}

.group::after {
    content: "";
    position: absolute;
    top: 1px;
    right: 0;
    bottom: 5px;
    width: 1px;
    background-color: #dcdcdc;
}

.group-body {
    height: 81px;
    display: flex;
}

.group-label {
    position: relative;
    height: 18px;
    line-height: 18px;
    font-size: 11px;
    text-align: center;
    white-space: nowrap;
}

.launcher {
    position: absolute;
    right: 4px;
    top: 4px;
}

.clipboard { width: 116px; }
.font { width: 243px; }
.align { width: 212px; }
.number { width: 167px; }
.styles { width: 197px; }
.cells { width: 118px; }
.editing { width: 206px; }
.addins { width: 106px; }
.analyze { width: 64px; }
.acrobat { width: 77px; }

.clipboard .group-label,
.font .group-label,
.align .group-label,
.number .group-label {
    padding-right: 16px;
}

.rows {
    display: flex;
    flex-direction: column;
    gap: 8px;
    padding-top: 9px;
}

.row, .split {
    display: flex;
    align-items: center;
}

.row {
    height: 25px;
}

.stack {
    display: flex;
    flex-direction: column;
}

.stack > * {
    height: 27px;
    justify-content: flex-start;
}

.stack > .tool {
    justify-content: center;
}

.tool {
    width: 27px;
    height: 25px;
}

.tool.on {
    width: 25px;
    margin: 0 1px;
    border: 1px solid #888;
    border-radius: 4px;
    background-color: #ebebeb;
}

.glyph {
    font-size: 15px;
    line-height: 20px;
    padding-bottom: 2px;
}

.bold {
    font-weight: 700;
}

.italic {
    font-style: italic;
}

.underline {
    text-decoration: underline;
}

.percent {
    font-family: "Open Sans", "Noto Sans", sans-serif;
    font-size: 20px;
    font-weight: 300;
}

.thousands {
    font-size: 10px;
}

.ab {
    font-size: 11px;
    fill: #444;
}

.wrap-ab, .dec {
    font-family: "Liberation Sans", Arial, sans-serif;
    font-size: 9px;
    fill: #333;
}

.wide {
    width: 22px;
}

.bar {
    width: 1px;
    height: 25px;
    margin: 0 1px;
    background-color: #dcdcdc;
}

.bar.tall {
    height: 66px;
    margin: 7px 6px 0 5px;
}

.select {
    position: relative;
    height: 25px;
}

.select select {
    appearance: none;
    width: 100%;
    height: 100%;
    padding: 0 2px;
    border: 1px solid #999;
    border-radius: 4px;
    background-color: #fff;
    font-size: 12px;
}

.select .chev {
    position: absolute;
    right: 2px;
    top: 9px;
}

.font-name {
    width: 127px;
    margin-right: 2px;
}

.font-size {
    width: 44px;
    margin-right: 2px;
}

.number-format {
    width: 152px;
}

.font .group-body {
    padding-left: 7px;
}

.align .group-body {
    padding-left: 7px;
}

.number .group-body {
    padding-left: 8px;
}

.styles .group-body, .cells .group-body {
    padding-left: 12px;
}

.line {
    gap: 4px;
    font-size: 12px;
}

.line.spaced .chev {
    margin-left: 10px;
}

.big {
    flex-direction: column;
    justify-content: flex-start;
    padding-top: 4px;
    font-size: 12px;
    line-height: 17px;
    text-align: center;
}

.big span {
    margin-top: 3px;
}

.paste {
    width: 57px;
    padding: 5px 0 0 14px;
}

.paste span {
    margin: 4px 3px 0 0;
}

.paste .chev {
    margin: 3px 4px 0 0;
}

.editing .group-body {
    padding-left: 7px;
}

.sort {
    width: 62px;
    margin-left: 3px;
}

.find {
    width: 76px;
}

.addins .big, .analyze .big, .acrobat .big {
    width: 100%;
}

.collapse {
    margin: 78px 10px 0 auto;
    height: 16px;
}

/* Barra de fórmulas */
.formula-bar {
    flex: none;
    display: flex;
    align-items: center;
    margin: 8px 4px 8px 8px;
    height: 25px;
    font-family: Inter, sans-serif;
}

.name-box, .fx-box, .formula {
    height: 25px;
    display: flex;
    align-items: center;
    background-color: #fff;
    border: 1px solid #dadada;
    border-radius: 4px;
}

.name-box {
    width: 106px;
    padding: 0 5px 0 4px;
}

.name-box input, .formula input {
    flex: 1;
    min-width: 0;
}

.dots {
    display: flex;
    flex-direction: column;
    gap: 3px;
    width: 2px;
}

.dots i {
    height: 2px;
    background-color: #444;
}

.formula-bar .dots {
    margin: 0 10px 0 9px;
}

.fx-box {
    width: 87px;
    justify-content: space-between;
    padding: 0 0 0 5px;
}

.fx {
    margin-left: 3px;
    font-family: "Liberation Serif", serif;
    font-style: italic;
    font-size: 18px;
}

.formula {
    flex: 1;
    margin-left: 6px;
    padding: 0 3px 0 9px;
}

/* Hoja de cálculo */
.workspace {
    flex: 1;
    min-height: 0;
    display: flex;
}

.sheet {
    flex: 1;
    min-width: 0;
    overflow: hidden;
    background-color: #fff;
    border-right: 1px solid #dcdcdc;
}

table {
    width: 1578px;
    table-layout: fixed;
    border-collapse: separate;
    border-spacing: 0;
    font-family: "Liberation Sans", Arial, sans-serif;
    font-size: 14px;
    color: #000;
}

.c-row { width: 25px; }
.c-a { width: 127px; }
.c-b { width: 249px; }
.c-m { width: 145px; }
.c-d { width: 230px; }
.c-e { width: 237px; }
.c-g { width: 130px; }

th {
    padding: 0;
    font-family: Inter, sans-serif;
    font-size: 12px;
    font-weight: 400;
    color: #555;
    background-color: #efefef;
}

thead th {
    height: 17px;
    line-height: 16px;
    border-right: 1px solid #dcdcdc;
    border-bottom: 1px solid #bdbdbd;
}

th.sel {
    color: #1e7145;
    background-color: #dfdfdf;
}

.corner {
    background: linear-gradient(135deg, #efefef 60%, #d2d2d2 60%);
}

tbody tr {
    height: 30px;
}

tbody tr:nth-child(6n+3) {
    height: 29px;
}

tbody th {
    vertical-align: bottom;
    line-height: 16px;
    border-right: 1px solid #bdbdbd;
    border-bottom: 1px solid #dcdcdc;
}

td {
    padding: 0 3px 0 2px;
    line-height: 16px;
    white-space: nowrap;
}

td:nth-child(2) {
    text-align: center;
}

td:nth-child(4), td:nth-child(8) {
    text-align: right;
}

.titles td:nth-child(4), .titles td:nth-child(8) {
    text-align: left;
}

.titles td:nth-child(n+3):nth-child(-n+8) {
    padding-top: 2px;
    border-bottom: 2px solid #000;
}

.selected {
    position: relative;
}

/* Marco de la celda activa */
.selected::before {
    content: "";
    position: absolute;
    inset: -1px 0 0 -1px;
    border: 2px solid #1e7145;
}

.selected::after {
    content: "";
    position: absolute;
    right: -2px;
    bottom: -2px;
    width: 5px;
    height: 5px;
    background-color: #1e7145;
    border: 1px solid #fff;
    border-width: 1px 0 0 1px;
}

/* Barras de desplazamiento */
.vscroll {
    width: 17px;
    flex: none;
    display: flex;
    flex-direction: column;
    align-items: center;
    padding: 4px 0 3px 4px;
    background-color: #f4f4f4;
}

.vscroll .track {
    flex: 1;
    width: 8px;
    margin: 4px 0;
}

.vscroll .thumb {
    height: 51%;
    border-radius: 4px;
    background-color: #6e6e6e;
}

.hscroll {
    width: 584px;
    height: 18px;
    margin: 0 16px 0 16px;
    padding: 0 4px;
    display: flex;
    align-items: center;
    background-color: #f4f4f4;
    border-radius: 9px;
}

.hscroll .track {
    flex: 1;
    margin: 0 5px;
}

.hscroll .thumb {
    width: 81%;
    height: 8px;
    border-radius: 4px;
    background-color: #6e6e6e;
}

/* Hojas */
.sheet-bar {
    flex: none;
    display: flex;
    align-items: center;
    height: 31px;
    padding-left: 10px;
    border-top: 1px solid #dcdcdc;
}

.nav-btn {
    width: 34px;
    height: 30px;
}

.sheet-tab {
    height: 28px;
    align-self: flex-start;
    margin-left: 37px;
    padding: 0 8px 0 10px;
    background-color: #fff;
    border-radius: 0 0 6px 6px;
    font-size: 14px;
    font-weight: 500;
    color: #222;
}

.sheet-tab span {
    line-height: 20px;
    border-bottom: 2px solid #107c41;
}

.add-sheet {
    margin-left: 47px;
}

.sheet-bar .dots {
    margin-left: auto;
}
```
